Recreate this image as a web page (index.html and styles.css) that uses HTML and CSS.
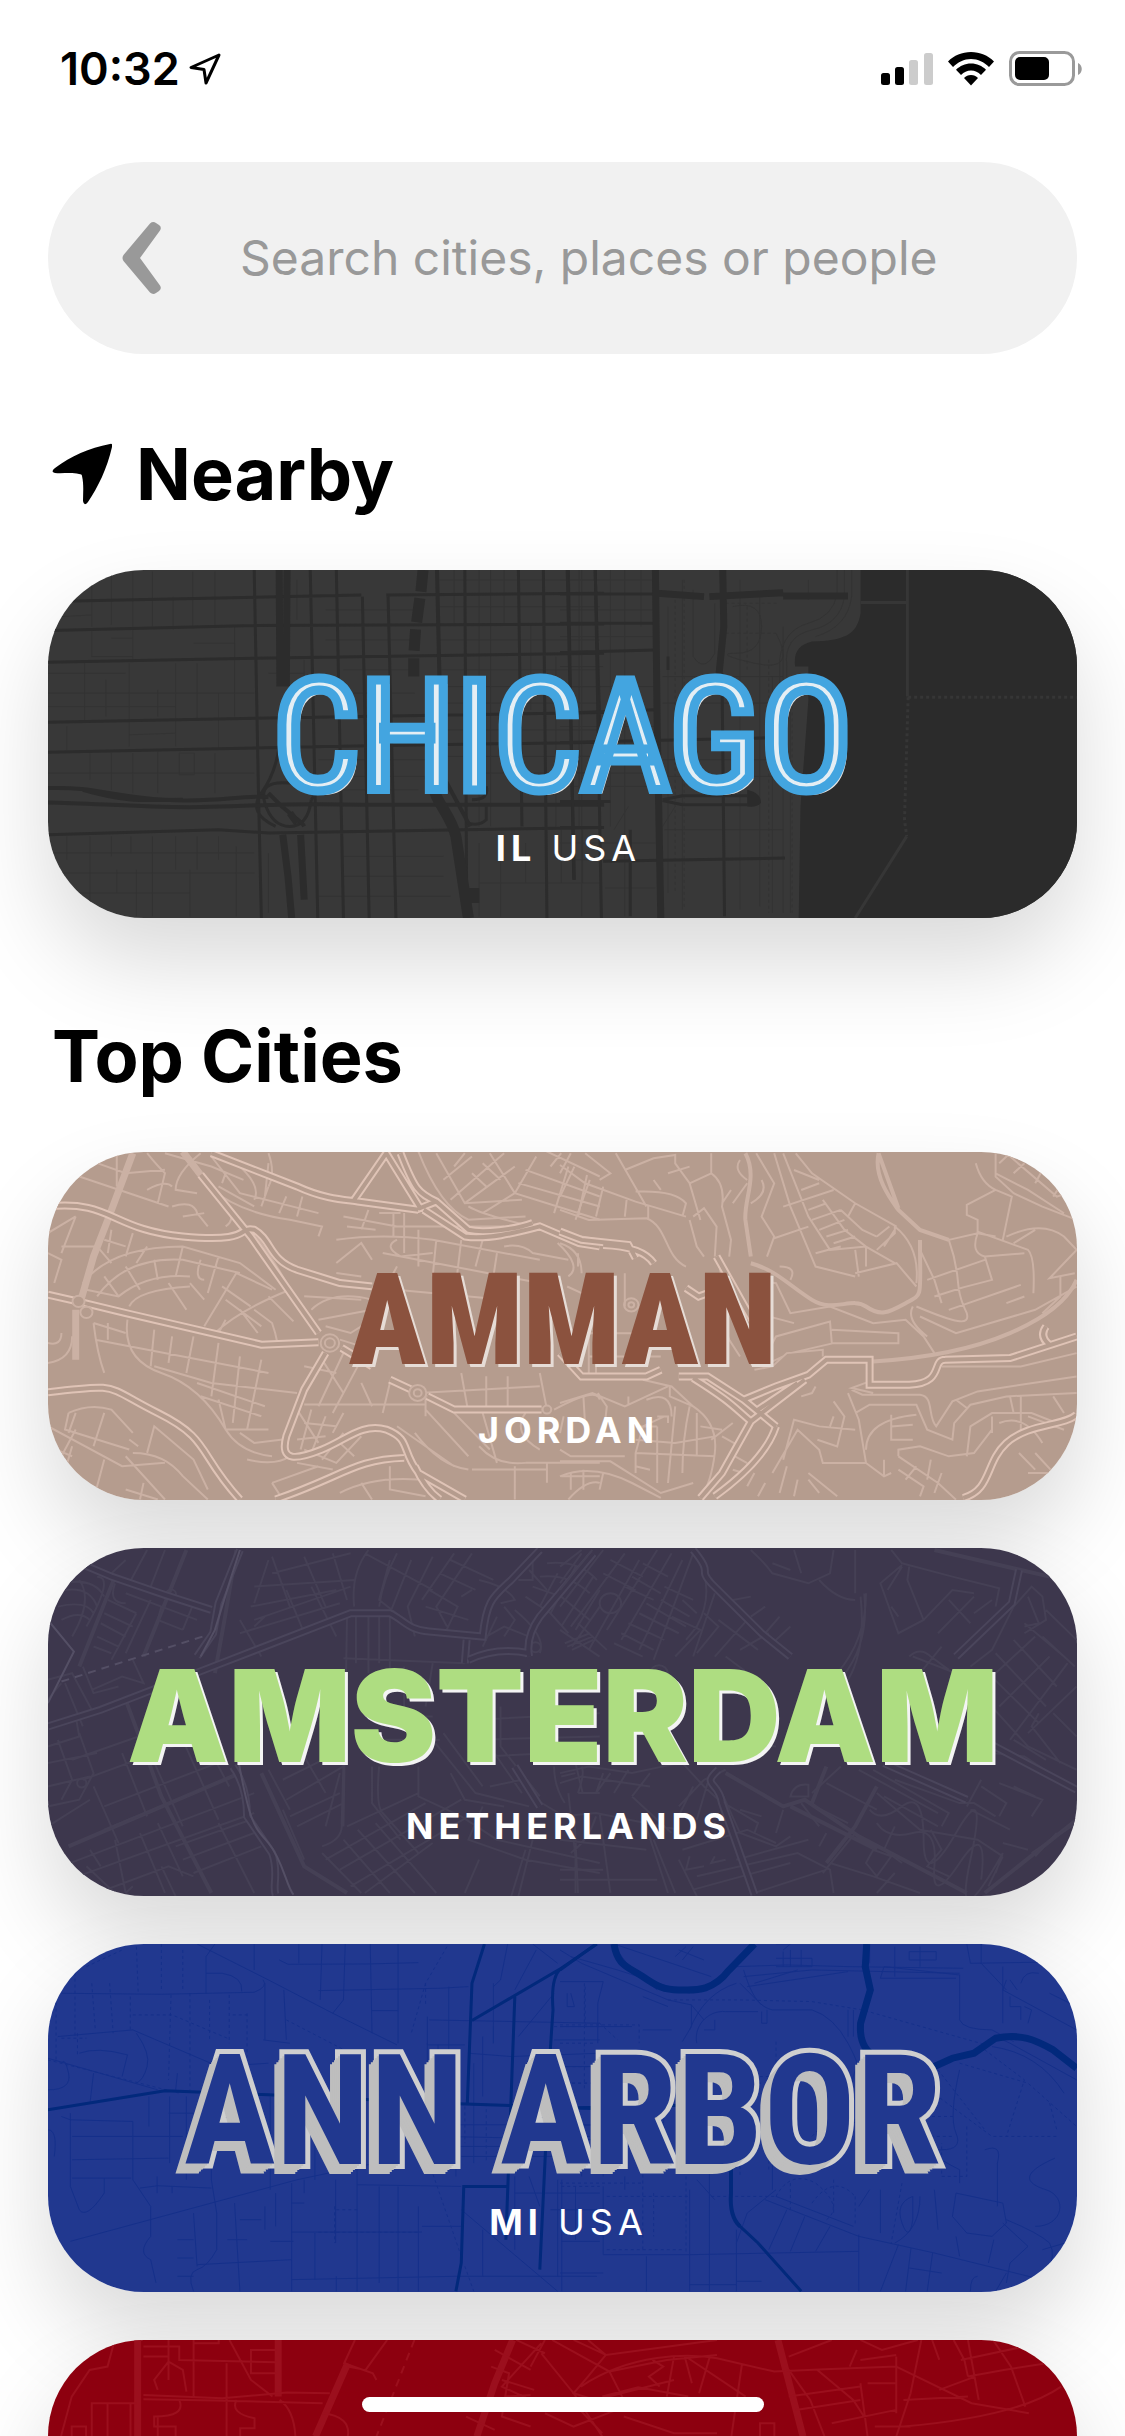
FILE: index.html
```html
<!DOCTYPE html>
<html lang="en">
<head>
<meta charset="utf-8">
<meta name="viewport" content="width=device-width, initial-scale=1">
<title>Search cities</title>
<link rel="stylesheet" href="styles.css">
</head>
<body>
<div class="app">
  <header class="status">
    <div class="status-left">
      <span class="clock">10:32</span>
      <svg width="34" height="34" viewBox="0 0 34 34" fill="none" stroke="#000" stroke-width="3" stroke-linejoin="round"><path d="M31 3 3 15.500 16 17.500 18 31Z"/></svg>
    </div>
    <div class="status-right">
      <svg width="52" height="34" viewBox="0 0 52 34"><rect y="21" width="9" height="12" rx="2.500"/><rect x="14" y="15" width="9" height="18" rx="2.500"/><g fill="#ccc"><rect x="28" y="8" width="9" height="25" rx="2.500"/><rect x="43" y="1" width="9" height="32" rx="2.500"/></g></svg>
      <svg width="46" height="34" viewBox="0 0 46 34"><path d="M23 0C14 0 6 3.500 0 9.500L5 15C10 10 16 7 23 7S36 10 41 15L46 9.500C40 3.500 32 0 23 0Z"/><path d="M23 11.500C17 11.500 12 14 8 17.700L13 23C16 20 19 18.500 23 18.500S30 20 33 23L38 17.700C34 14 29 11.500 23 11.500Z"/><path d="M23 23C20 23 18 24 16 26L23 33.500 30 26C28 24 26 23 23 23Z"/></svg>
      <svg width="74" height="36" viewBox="0 0 74 36"><rect x="1.500" y="1.500" width="63" height="32" rx="9" fill="none" stroke="#9a9a9a" stroke-width="3"/><rect x="6" y="6" width="34" height="23" rx="5"/><path d="M69 12C74 14 74 22 69 24Z" fill="#9a9a9a"/></svg>
    </div>
  </header>

  <form class="search" role="search">
    <button class="back" type="button" aria-label="Back">
      <svg width="40" height="74" viewBox="0 0 40 74" fill="#999"><path d="M28 2.500Q31 0 34 2L37 4Q40 6 38 9.500L18 37 38 64.500Q40 68 37 70L34 72Q31 74 28 71.500L1.500 40Q-.500 37 1.500 34Z"/></svg>
    </button>
    <input class="search-input" type="search" aria-label="Search cities, places or people" placeholder="Search cities, places or people">
  </form>

  <main>
    <section class="section">
      <h2 class="heading">
        <svg width="60" height="62" viewBox="0 0 60 62"><path d="M58 1Q61 0 60 4C55 26 46 44 36 59Q32 64 31 58C31 50 32 42 30 33Q30 31 27 31C19 29 10 31 3 30Q-2 29 3 25C19 13 37 5 58 1Z"/></svg>
        <span>Nearby</span>
      </h2>
      <a class="card chicago" href="#chicago">
        <svg class="map" viewBox="0 0 1029 348" preserveAspectRatio="xMidYMid slice" aria-hidden="true">
          <g class="minor" transform="matrix(.357 0 0 .333 -8 -10)">
            <path d="M145 60V200M200 40V195M260 35V300M315 35V200M373 110V210M428 35V205M490 35V205M545 200V470M60 170 145 165M200 235H260M145 205V290H260M430 250H545V290M22 340H240M125 310V480M185 360V470M22 400H600M250 310V560M330 390V470M380 310V560M440 310V480M500 400V570M22 440H380M250 525 380 520M75 500V570M140 580V660M200 580V690M260 580V700M330 575V700M390 580V645H432V580ZM490 580V700M22 640H600M22 880H600M75 830V900M140 830V1070M200 830V890M255 830V880M315 830V1070M380 830V930M440 830V930M500 830V900M22 940H600M215 930V1000M270 930V1070M420 930V1070M550 860V1070M60 1000H420M640 880V1060M720 60V180M740 300V370M640 340H740M1160 30V190M1230 30V800M1262 30V800M1300 30V190M1375 190V450M1445 290V800M1510 30V800M1120 60H1568M1120 140H1568M1120 240H1568M1120 330H1568M1120 380H1568M1120 430H1568M1120 510H1568M780 650H1100M780 600H1100M1130 590H1568M1240 640H1568M1230 970H1568M1230 850V1070M1290 850V1070M1360 850V970M1460 810V970M1520 810V970M800 150H1050M800 240H1050M850 330H1050M850 400H1050M780 690H1060M850 890H1130M850 950H1130M780 1010H1150"/>
          </g>
          <g class="minor" transform="matrix(.36 0 0 .333 512 -10)">
            <path d="M60 30V1070M140 30V800M180 30V1070M225 30V200M0 60H265M0 150H265M0 230H265M0 320H120M0 380H265M0 500H265M0 590H265M0 640H265M0 680H265M0 850H265M0 900H110M125 985H265M285 350H620M285 430H600M285 600H600M290 650H660M290 810H620M370 90V290Q400 340 430 280V130M340 60V1050M300 140V1000M500 60V1050M555 110V1040M590 350V1060M620 200V1060M640 400V1060M480 140Q560 120 560 200T490 280 540 310 600 220M690 60V120M770 30V100Q760 170 690 190T610 300V400M790 30V110Q780 190 700 210T630 320V400M810 30V110Q800 200 710 230M150 810 190 740M285 800 320 740"/>
            <path class="dots" d="M345 60V1050M320 120V1000M580 300V1060M645 350V1060M460 130H610M460 220H600M520 140V330"/>
          </g>
          <g class="major" transform="matrix(.357 0 0 .333 -8 -10)">
            <path d="M60 124 900 105M970 105 1580 100M30 212 600 197 1580 192M22 307 600 295 1580 280M22 487 770 472 1580 458M22 577 800 560 1580 547M22 825 500 810 640 820 1580 803M600 30 612 700 620 1075M757 30 778 1075M830 30 850 1075M903 110 922 1075M975 110 997 1075M1190 30 1195 1000M1340 30 1350 800M1410 30 1420 1075M1480 30 1495 960M1555 30 1568 500M670 560Q660 640 620 700T660 800M760 720Q750 800 700 800T630 730 700 670 760 720M1250 680Q1260 720 1210 720M1250 740V780Q1230 800 1200 790"/>
            <path class="w2" d="M22 685C150 680 200 710 350 720S560 705 640 712M22 728C150 730 300 745 450 742S650 730 900 735H1580M120 690C250 730 300 720 400 720M640 700C700 770 730 780 740 800M1112 30 1125 640 1205 800"/>
            <path class="w3" d="M670 30 672 380M692 30 690 380M680 825C690 900 700 1000 705 1075M730 825 740 1020M700 760 720 790"/>
            <path class="w4" d="M1073 30 1067 95M1064 115 1055 187M1052 208 1048 272M1047 295V350M1092 650C1110 740 1150 760 1165 830L1200 1075M1215 985V1030"/>
          </g>
          <g class="major" transform="matrix(.36 0 0 .333 512 -10)">
            <path d="M20 30 40 960M98 30 115 1075M0 102H265M0 190H275M0 278 265 270M0 460 265 450M0 548 620 533M0 803H110M120 905 625 895M195 810V1070M450 340 457 1070M0 725H140M285 720 340 708H520M285 722 340 735H520M300 290V330"/>
            <path class="w3" d="M265 30 270 500 280 1075M452 30 455 200 442 340M270 100 400 110M415 110 620 98M620 108H800"/>
            <path class="water" d="M835 30V160C825 225 790 242 700 245 665 255 648 275 653 320H690V420L668 740 663 1075H1450V30ZM520 690Q560 700 558 730 545 745 520 740Z"/>
            <path class="pier" d="M965 30V410M835 128H965M963 830 820 1075"/>
            <path class="pier dots" d="M967 412H1435M967 412 957 780 963 830"/>
          </g>
        </svg>
        <span class="wordmark">CHICAGO</span>
        <span class="place"><b>IL</b> USA</span>
      </a>
    </section>

    <section class="section">
      <h2 class="heading">Top Cities</h2>
      <div class="cards">
        <a class="card amman" href="#amman">
          <svg class="map" viewBox="0 0 1029 348" preserveAspectRatio="xMidYMid slice" aria-hidden="true">
            <defs>
              <path id="amL" d="M22 620C200 600 200 690 400 710S550 680 600 690C650 720 640 780 720 810L840 850 930 860M450 525 590 710 780 1000M480 460 720 560C800 600 860 600 890 605L1060 630M880 600 970 460 1065 625 1110 605M1010 460C1050 570 1060 580 1110 605L1200 690C1240 700 1330 690 1380 670M1075 630 1190 710C1250 720 1330 700 1400 680L1510 730 1568 740M22 885 105 905 240 940 620 1035 780 1028M845 1045 930 1100M980 1140 1040 1170M1085 1190 1160 1230H1405M800 1060 740 1170 690 1310C670 1390 720 1380 790 1350S900 1270 970 1290C1040 1320 1010 1350 1060 1420L1190 1500M22 1178C230 1150 180 1160 330 1240S440 1360 560 1500M660 1500C850 1430 880 1380 1020 1375M1050 1400Q1080 1470 1120 1500"/>
              <path id="amR" d="M0 275 60 300 190 315 210 355M120 315Q230 320 260 370M350 445 385 470 475 435M435 350 560 590M0 640 60 710H240L280 690M330 710H410L510 780 600 860M370 715C480 790 480 800 530 845L450 1000 390 1075M510 780 600 740 690 705 740 660H860V735H970C1070 730 1030 660 1070 660L1250 655 1435 590M550 810 660 730M600 860Q570 960 430 1070M1350 560Q1330 590 1360 615M530 845 680 720M1120 1075C1200 1050 1180 970 1240 910S1400 860 1435 825"/>
            </defs>
            <g class="minor" transform="matrix(.357 0 0 .333 -8 -152)">
              <path class="w3" d="M260 460 190 660 150 770 115 900M400 455 450 525M100 930V1080"/>
              <path d="M110 530 360 620M160 490 240 520 350 510M215 460V560M300 460Q330 500 350 520L330 610M450 460Q380 520 380 570L440 580M300 570Q350 540 370 560M370 620Q430 600 440 640L470 680M400 650 460 640M480 470 560 580 780 640M500 560 600 620M520 520 510 550M560 500Q620 560 600 600M640 490 630 590M470 560Q560 640 700 660L790 680 780 710M640 560 620 620M690 590 670 640M735 590 720 650M500 600Q560 650 520 680M350 460 480 500 570 540M60 740 160 740 200 790M22 700 100 650M100 650 60 760M22 760 60 780 40 850M180 720 240 740M200 690 190 760M260 700 240 770M300 740 270 790M120 850Q200 740 400 740L560 790 660 870M130 870 220 890Q300 820 420 830M180 830 220 890M240 800 280 870M320 780 330 840M400 740 380 830M160 890Q240 770 400 780L560 820M450 780Q430 840 460 840M500 770 470 880M250 920Q270 870 420 860M360 850 410 930M420 850 460 900M460 980 550 820 650 870M510 860 590 920M490 1000Q560 930 700 870M520 900 620 980M560 930 610 1000M600 930 650 970Q660 1000 665 1030M640 890 710 965M500 1000 520 960M245 960Q230 1080 340 1120 450 1160 520 1290 560 1360 650 1370M150 970 240 1000M155 1020 250 1040 640 1120M190 970V1020M320 990 310 1100M370 1010 360 1090M430 1010 410 1120M500 1030 480 1190M560 1070 540 1270M620 1080 580 1290M320 1100 480 1150 720 1180M440 1150 630 1220M450 1190 620 1250M500 1200 520 1290 640 1290M150 970Q160 1060 180 1120M22 1030Q60 1040 60 1000M22 1090Q90 1080 90 1010"/>
              <path d="M640 460Q660 520 640 560M850 650 1000 680H1300M860 680 940 690M990 640V710M920 630 900 690M950 640 1010 640M830 720Q960 700 1100 720L1400 780M830 790 900 730 930 780M830 820 900 830M1020 640V760M1060 690V800M1110 720 1100 830M1180 720 1160 900M1240 720 1220 800M960 760 1400 850M900 860 1300 900M1000 720Q960 740 1010 770L1100 760M1300 740Q1350 730 1380 760L1480 780M1450 730Q1520 800 1480 830M1000 800 980 840M1280 760 1260 900M720 920Q700 850 600 700M740 890 900 900M760 930Q820 870 930 900M780 960 930 930M840 1020 930 1050M800 980 870 1000 930 960M740 1100 830 1120M790 1080 850 1180M850 1060 780 1220M900 1080 820 1240M740 1215H1080M720 1230 780 1330M760 1230 730 1350M800 1250 760 1360M850 1240 820 1300M740 1270 830 1280M720 1320 800 1310M900 1150 930 1220M980 1150 960 1240M1060 1180 1400 1160M1080 1250V1180M1180 1120 1200 1240M1250 1130V1240M1310 1130V1230M1400 1120 1420 1230M1000 1280 1160 1400M1050 1300Q1120 1400 1200 1410M1080 1230 1200 1370M1160 1240 1260 1350M1240 1240 1280 1390M1230 1340Q1280 1400 1360 1390M1360 1240Q1320 1300 1400 1350M1440 1230Q1560 1160 1568 1200M1360 1390H1568M1210 1410H1420M1330 1400V1500M1420 1390V1450M1460 1430H1568M1480 1500Q1530 1440 1568 1450"/>
              <path d="M1060 455Q1120 620 1200 660L1360 650M1110 460 1190 610 1350 600M1130 540 1210 470M1150 600 1300 460M1190 610 1330 500M1240 640 1330 580M1190 460 1160 500M1260 460 1330 580 1568 660M1210 520 1250 560M1240 490 1290 540M1340 550 1568 620M1360 510 1568 590M1390 470 1330 580M1430 500 1460 460M1480 500 1440 640M1540 540 1500 660M1410 450 1568 530M1200 620Q1260 660 1568 720M80 1240Q140 1210 200 1230L260 1300M80 1240 70 1290 250 1350M100 1240 80 1300M180 1240 150 1340M22 1280 230 1400 350 1390M60 1370 100 1290M90 1340 60 1450M180 1380 150 1500M240 1370 350 1500M300 1360 320 1280 430 1380 470 1470M260 1360Q350 1360 400 1430L470 1500M250 1320 275 1340M290 1450 280 1500M240 1470 330 1500M22 1340 90 1370M560 1300 600 1330 680 1320M580 1380Q660 1400 700 1370M650 1450 780 1400M650 1450 680 1500M740 1350 830 1390 900 1310M720 1390 820 1410M790 1380 850 1300M840 1330 880 1370M980 1400V1470L1080 1490M900 1450 930 1500M840 1480Q930 1430 1060 1440"/>
              <use class="twin" href="#amL"/>
              <use class="core" href="#amL"/>
            </g>
            <g class="minor junction" transform="matrix(.357 0 0 .333 -8 -152)">
              <circle cx="108" cy="905" r="17"/><circle cx="130" cy="938" r="17"/><circle cx="812" cy="1030" r="26"/><circle cx="812" cy="1030" r="14"/><circle cx="1058" cy="1180" r="24"/><circle cx="1058" cy="1180" r="11"/><circle cx="1420" cy="1230" r="12"/>
            </g>
            <g class="minor" transform="matrix(.36 0 0 .333 512 -12)">
              <path class="w2" d="M515 40C550 110 510 180 515 240L530 350M885 40C870 110 920 180 940 210L1000 270 1080 300M885 40 940 205M530 370C600 390 640 440 700 480S810 470 850 500 910 520 960 490 1000 480 1000 300M870 665Q1100 650 1250 580T1435 420"/>
              <path d="M0 75 70 130 210 185 350 230M0 210 80 240 240 235C300 260 290 350 350 380M30 40 0 100M110 120 140 100 70 40M40 80 0 170M75 105 50 230M120 140 100 230M185 180 180 230M245 195V235M155 40 240 200M210 155Q320 150 350 190L340 230M180 90 260 55 320 45V70L360 130 390 240M260 120 280 150M300 100 360 80M420 40V100L360 130M420 100Q460 130 450 200L475 300 470 350M370 230 400 205 435 260 430 350M400 350 380 320 360 240M475 150 450 190M520 130 480 190M500 60Q480 90 520 120M560 120Q580 160 530 190M545 40 595 130 560 230 595 290 575 350M595 40 640 200 710 380 820 410M620 40 690 230 750 330 850 320M655 40 700 100 820 190 935 260M650 90 720 120M670 150 720 130M620 200 760 150M690 210 740 190M700 240 780 210M595 295 690 260M720 270 790 240M740 290 800 270M760 310 820 290M730 180 790 270 850 320 930 370M780 210 840 270 880 290M880 290 915 260M900 320 930 270M820 190 800 230M880 330 930 280 930 260Q1000 320 990 430M710 340 780 320M820 330 830 410M850 320V380M820 400 935 370 990 440M1080 300 1160 280 1210 290M1080 300C1120 420 1090 430 1130 520 1140 560 1100 550 990 500M1210 150 1130 195V225L1160 240V280Q1140 340 1180 350L1290 340M1155 70Q1170 130 1210 150L1255 170 1230 300M1160 275 1300 330Q1320 350 1315 460M1240 290Q1340 240 1400 290L1435 330 1360 415 1430 400M1260 310 1320 270M1180 350 1200 420Q1120 440 1040 470M1000 330 1040 420 1060 490M1020 420 1180 360M1080 510 1280 435M1210 40V110L1260 160 1340 200 1435 240M1240 40 1380 170 1435 150M1210 100 1300 150 1400 220M1220 70 1250 40M1260 100 1290 70M1320 130 1340 90M1370 170 1400 120"/>
              <path d="M540 420 600 430 640 520 750 500 870 550 960 540 1010 590 1040 640M540 460 580 530 650 550M610 380Q660 380 640 420M980 500Q960 540 1020 590M1000 530 1100 580 1320 510 1435 440M1240 490 1290 470M1340 520 1390 470 1390 410M540 600 580 630 600 590 750 545 755 610 940 610V580L755 570M640 640 760 610M540 690 590 680 630 640 730 630V650M560 680 620 650M670 770 700 760 710 740M1060 680 1280 680 1435 640M870 760 810 745 860 725M810 750 840 765H1000C1040 770 1020 830 1045 860L1090 785 1160 755 1435 710M800 760 830 840 850 970 900 1010 920 1000M820 820 860 795H990L1020 870 1090 900 1095 850 1140 795 1240 770 1435 760M850 930Q850 840 990 825M920 825V900H980M920 860 980 855M1130 950 1140 860 1200 820 1310 820 1380 850M1200 880V830M1280 770V880M1220 850Q1290 820 1340 910M1300 830 1400 870M1100 780 1130 805M1250 770 1260 820M1370 770 1400 820M940 950 940 930 1000 920 1080 950 1150 940 1200 870M940 950 1050 1030 1100 1080M990 980 960 1020M1030 960 1020 1020M1060 1000 1040 1060M1275 940 1320 990M1320 940 1380 1010M1300 1000H1360V1040M1380 970 1435 1010M590 1000 660 870 720 930 730 970 850 970M620 960 650 840 720 860 820 870M760 830 750 860M760 785 790 830 770 920 715 900M630 980 610 1060M660 1020 650 1070M690 1020 720 1060M690 1000 770 1070M1000 1070 1010 1040 940 990M900 960V1010"/>
              <path d="M0 310Q60 330 60 400M50 340V380M20 440 60 460M180 400V500M80 500V700M80 580H200M100 620V700M150 590V660M80 650H280M440 360 450 420 500 560M440 500 470 600 500 650M230 720 310 740 370 800Q440 850 430 940T390 1075M0 790 90 760 180 800 300 740M65 770 70 860M105 760 130 800 125 850M190 770V795M10 830 0 880M0 930 30 950H180M305 740V770L370 800M240 780Q310 750 310 830M270 830H300V850M290 830 230 860 210 940V1000M320 800 300 1030M360 800Q340 900 340 1000M210 860H270M210 900 320 910 430 890M210 940 430 950M210 980 250 990M270 860V1030M380 820V950M0 965H140L280 1060 370 1030M0 1010Q90 970 200 1030L280 1075M30 1000V1050M65 990V1050M120 1000 110 1050M450 890 500 920M470 940 520 970M480 990 510 1000M540 1000 520 1040M570 1030 550 1070M420 900 480 850M390 860 450 870"/>
              <use class="twin" href="#amR"/>
              <use class="core" href="#amR"/>
              <circle cx="198" cy="495" r="20"/><circle cx="198" cy="495" r="8"/>
            </g>
          </svg>
          <span class="wordmark">AMMAN</span>
          <span class="place"><b>JORDAN</b></span>
        </a>

        <a class="card amsterdam" href="#amsterdam">
          <svg class="map" viewBox="0 0 1029 348" preserveAspectRatio="xMidYMid slice" aria-hidden="true">
            <defs>
              <path id="asL" d="M90 60 200 110 350 165 480 210M560 30 500 190 485 280 440 350M22 560 170 510 460 390 870 220 980 220C1020 240 1030 270 1090 275L1240 290C1250 180 1270 170 1320 120L1400 30M1550 40 1400 230Q1360 290 1370 350M1190 370 1195 300M1200 360Q1280 320 1370 340M540 680Q580 740 580 830L650 940C670 1000 650 1040 660 1065M1330 680 1400 800"/>
              <path id="asR" d="M370 30C430 110 380 80 420 130L560 280 640 350M1275 90 1255 190 1100 350M440 690C390 740 440 720 450 790L540 1065M900 670 1130 780M1190 610 1435 750"/>
            </defs>
            <g class="minor" transform="matrix(.357 0 0 .333 -8 -8)">
              <path class="w2" d="M410 30 350 190 290 350M210 110 110 380M550 30 520 220 490 400M80 920 560 700M240 480 340 770 480 1060M620 700 740 980 860 1060"/>
              <path d="M300 30 250 130M350 30 310 140M240 60 190 110M60 130Q150 110 180 170M70 150Q140 140 160 200M50 200Q130 180 150 220M60 240Q110 210 140 240M160 110Q210 110 130 260M110 120Q150 180 90 290M210 130Q190 190 240 190M190 180 270 220M180 220 260 260M170 250 240 290M160 290 220 320M150 320 200 340M240 160 340 200 330 240 400 270M340 200 440 240M270 220 200 360M310 180 240 340M400 270 430 190 370 170M120 380 150 460 220 440M145 450 230 410 290 430 260 360M20 420 90 400 150 520M70 430 120 560M22 480Q50 440 60 430M22 620 110 590 100 530M22 670 160 640M22 740 140 710M50 600 90 720 60 780M110 580 150 700 110 780 22 800M22 860 140 780M150 740 220 910M230 640 300 830M300 620 400 860M400 600 500 840M450 580 530 740M90 660 330 570M120 720 400 610M180 800 520 660M180 870 540 710M60 980 600 760M80 1020 600 820M130 980 210 1060M210 900 240 1060M280 880 350 1060M330 850 400 1010M380 920 590 840M400 960 600 880M430 1000 620 920M500 850 600 1060M140 930 170 980M160 1060 360 980 430 1010M340 980 380 1070M260 1040 240 1060M650 100 870 40M600 140 880 120M590 200 830 150M600 240 870 140M560 280 840 190M640 60 600 190M650 50 700 200M740 50 800 200M820 40 860 180M690 150 740 280M760 140 830 290M560 240 620 350M630 230 600 260M880 200Q870 100 920 30M950 200Q960 120 1000 40M910 40 1100 150M980 60 950 180 1010 230M1040 60 980 220M1100 50 1030 200 1050 290M1160 40 1070 180M1210 40 1110 200 1140 260M1080 200 1200 240M1120 100 1220 150M1150 60 1270 120M1180 170 1210 150M1090 150 1170 200 1130 290"/>
              <path d="M860 230 850 860M885 230V370M920 230V400M950 230V370M980 230V400M850 355 1190 370M930 530H1100M900 600H1120M850 670 845 850Q850 900 790 920M930 680V790L1010 900M950 680Q940 800 960 820L1060 940M1060 680V770L1180 830M860 860 1060 760M800 960 1080 790M840 990 1180 780M870 1040 1200 830M910 1060 1100 910M1240 800 1200 900 1360 960 1568 1000M1180 830 1280 900 1568 970M1230 960 1190 1060M1360 930 1320 1070M1380 900 1340 1070M790 940 900 1060M850 900 980 1060M890 870 1050 1060M940 850 1110 1060M690 780 850 680M680 720 830 640M700 830 840 760M720 860 850 790M640 690 700 810M740 650 800 760M840 700 800 860M680 810 740 960M1100 600 1220 760 1370 800M1130 580 1240 740M1150 700 1190 780 1300 800M1260 500V620L1350 760M1290 500V620L1400 770M1220 540 1568 520M1210 600 1568 590M1240 650 1440 640M1260 740 1350 720M1480 760 1500 950V1060M1500 670 1520 760H1568M1440 680Q1440 740 1470 790M1460 710 1500 700M1390 780 1500 850M1100 370 1080 500M1020 380V560M1230 120Q1310 140 1330 180L1290 190M1300 200 1330 240 1300 290M1330 210Q1420 290 1400 340M1250 290 1300 260 1370 290M1280 230 1240 320M1370 90 1420 150M1340 120H1380V60M1420 70Q1510 60 1560 120M1400 110Q1480 100 1540 160M1380 140 1460 170 1540 240M1360 170 1430 220 1480 280M1450 100 1400 200M1500 80 1430 220M1550 110 1460 260M1568 150 1500 270M1568 200 1490 320M1470 310 1540 280M1490 330 1550 300"/>
              <circle cx="367" cy="163" r="14"/><circle cx="117" cy="730" r="13"/><circle cx="1388" cy="322" r="15"/>
              <use class="twin" href="#asL"/>
              <use class="core" href="#asL"/>
              <path class="bright" d="M22 240 95 335 22 490M560 30 530 130 490 270 450 350M555 660C590 860 600 860 640 910S690 1040 710 1065"/>
              <path class="bright dashed" d="M60 425 470 285"/>
            </g>
            <g class="minor" transform="matrix(.36 0 0 .333 512 -8)">
              <path class="w2" d="M460 700 620 800 680 780 830 890 1130 1060M640 800 880 930M740 680 700 790M880 740 820 860 740 970M1180 1060 1435 840M1040 30 1360 110"/>
              <path d="M120 30 0 200M90 30 0 150M60 30 0 80M180 40 30 260M220 60 80 330M270 30 130 270M310 40 170 300M340 60 220 330M370 40 260 360M140 60 230 110M120 100 210 150M230 70 300 110M200 110 280 160M180 140 260 180M290 140 370 180M280 180 360 230M240 190 350 260M220 220 330 280M190 250 290 300M170 280 260 330M150 310 230 350M0 270 110 350M50 250 130 330M20 320 90 290M60 40 0 130M340 180 380 220M310 230 390 270 320 350M400 100Q420 180 380 260L350 300M430 160 370 350M400 220 440 260 380 340M440 240 550 330M430 350 520 240M500 330 580 280M480 180 530 170M530 230 570 200M570 280 610 230M590 310 640 260M460 350 560 430M530 30Q570 70 590 100L690 130 750 100 760 30M590 70 640 90M650 30 670 100M720 120Q770 180 820 180M920 30 950 70M950 75 890 130 940 280 1010 240 965 120 970 80M910 150 950 80M920 200 940 230M1010 240 1090 150 1150 160M1150 170 1050 280M950 70 1090 110 1220 145 1210 200M1080 180 1140 250M1200 180 1150 220M1260 200 1310 140 1340 170 1350 240 1290 280M1300 170 1330 250 1290 260M1350 210 1435 300M1260 200 1200 330 1140 380M1340 290 1430 380M1290 250 1400 350M1260 300 1380 440M1210 340 1350 500M1180 390 1330 550M1140 430 1300 620M1360 350 1220 500M1320 290 1180 430M1410 370 1250 600M1435 440 1300 580M1370 520 1435 590M1330 520 1310 560 1390 670M1260 600 1350 660M970 350Q1000 320 1030 350L1080 390M1000 400 1060 320M1200 640 1290 650 1360 700M1300 620 1435 690M980 350 1100 400"/>
              <path d="M770 400Q850 300 850 160M785 410Q860 310 845 160M800 420Q850 330 835 170M430 600 600 620M820 160V30"/>
              <path d="M0 700 80 680 200 700 330 670M50 760Q70 700 60 680M50 760H100L120 700M200 770 250 700M0 730 60 710 250 740M200 770 310 880M100 760 140 700M150 760 190 690M330 800 400 720 460 690M340 670 400 740 450 790M410 730 380 840M370 740 320 850M440 780 550 850 540 880M450 760 500 880 600 920 640 890M620 810 600 880M670 790 720 860M500 810 560 830M740 730 880 810M690 790 800 850M640 770Q650 730 690 735V770ZM780 680 700 760M830 690 1050 820M870 690 1080 820 1060 860M930 720 1110 790 1150 790 1210 830M1130 800 1170 720M1170 740 1240 790 1220 830M1220 730 1340 780 1310 830M1260 740 1320 770M1140 810 1250 870M900 770 1050 860M880 760 1000 870 1160 900 1230 950M860 810Q890 850 950 800T1010 900 1100 880 1140 960 1230 940L1210 1000M880 850Q910 900 980 880T1040 980 1110 970 1170 1020M930 860 900 930 950 970M1030 870 1060 930 1020 980 1080 1010M1230 910 1300 930M850 970 870 930 920 950 880 1010ZM1230 950 1190 1040M330 960 380 1070M360 950 350 990 400 980M430 950 420 970 460 960M340 930 520 870 600 910M370 1050 640 970M380 1010 660 940 750 990 760 1060M490 960 690 900M540 1060 740 990M820 880 730 1000M750 970 870 1010 1000 1060M880 1060 930 1000M1320 950 1380 880M1310 940 1435 850M0 990H120M0 830 100 820 330 870M40 830 50 1060M110 820 140 1060M150 830 180 900M0 900 240 930M0 1020 270 1020M260 900 320 1060M230 830 300 1060M740 880 720 920M30 940Q80 900 100 830"/>
              <circle cx="140" cy="190" r="30"/><circle cx="275" cy="400" r="24"/>
              <use class="twin" href="#asR"/>
              <use class="core" href="#asR"/>
            </g>
          </svg>
          <span class="wordmark">AMSTERDAM</span>
          <span class="place"><b>NETHERLANDS</b></span>
        </a>

        <a class="card annarbor" href="#ann-arbor">
          <svg class="map" viewBox="0 0 1029 348" preserveAspectRatio="xMidYMid slice" aria-hidden="true">
            <g class="minor" transform="matrix(.357 0 0 .333 -8 -14)">
              <path d="M60 190 340 193 600 187Q640 170 625 150M440 42 640 150 820 250 1000 345M465 130H510Q570 140 565 185M490 42 465 80V190M600 42V120M630 160V330M683 180 690 330M670 90 695 103 920 102 1060 98M725 42V100M790 42 785 210M855 42 850 210 820 250M925 42 930 310M1003 42V340M780 182 1120 175 1200 170M930 242H1003M22 385 330 480M50 320 260 300 500 410 640 400M110 370Q160 350 245 375L230 440M270 310Q310 370 300 410T270 460M150 430 140 520M22 480Q90 480 80 430T60 400M385 430 380 480M625 330 700 340M85 550V770L110 840Q130 870 180 790V745M60 560 85 570 260 575V750L310 830V920Q270 970 310 990L325 1060M90 620H400M90 690 360 685M305 500V590M360 550H520M363 500V700M410 500V750M90 745H255M85 935 480 820 720 750 940 700M22 600Q50 600 40 680M480 640V750L495 850V960Q470 1010 440 1020T430 1085M280 775 330 768 480 775M328 740V790M370 770V790M430 850 440 1010M545 820 560 1085M560 870H620M525 930H580M645 935H710M630 830V900M660 790V890M705 760V1085M705 820H740M440 1005 705 990M705 907H1070M740 790V750M828 750V940M888 700V1085M950 770V1060M1003 770V1085M888 765 1180 770M1060 830V1085M1070 890H1180M705 1050 1160 1040H1560M645 500V780M770 750V540M770 910V1050M385 1040H430M385 930H430M385 985H430M830 1040V1085M1145 170V520M1085 260V345H1190M1090 270 1568 280M1270 160V340M1310 42 1290 150 1270 170M1390 60 1330 180M1440 190 1340 320M1200 370 1320 380 1568 370M1085 340V700M1115 345V520M1165 360V740M1240 320V500M1270 290V340M1215 400V700M1130 585H1568M1130 620 1568 630M1130 650H1568M1180 680H1568M1330 740V960M1370 740 1400 830M1450 750V1040M1500 770V930M1180 840 1450 1085M1240 900V1040M1330 790H1568M1430 840H1568M1460 935H1568M1568 330H1440M1380 42 1450 100"/>
              <path class="dots" d="M98 110V320M145 160 155 300M195 160 205 310M45 200V390M105 310V380M253 200V300M340 42V185M367 195 360 450M420 190V480M475 210V330M530 195V340M580 250V380M260 255H370L525 325M540 255H580M60 325H130M130 110 230 60M270 50 275 185M400 60V185M22 390 390 490M690 270 870 370M1140 50 1080 160V230M1080 160 1040 310M780 908H1060M825 830V940M1090 700 1180 980M1130 520V650M1190 530V640M1250 520V700M1525 160V480M1440 290H1568M1460 410H1568M1440 460H1568M1330 620H1568M830 840H890M1190 1010 1215 1085M1460 770H1568"/>
            </g>
            <g class="minor" transform="matrix(.36 0 0 .333 512 -14)">
              <path d="M0 155H120L105 220V340M0 290H200M230 300H310M0 410H120M30 190 40 230M20 190V230H40M0 590 100 585 120 650V740M290 555 280 650M60 600V740M0 650H200M0 690H130M5 750V1085M0 1030H120M120 770V975L360 975 830 965M180 740V780M240 980V1085M360 780V1085M415 610V1085M490 900V1085M490 940 520 850 600 780M360 1065H490M490 1055H560M380 750 430 810M600 800 815 890M590 600V780M630 840 580 960M680 860 640 965M750 890 710 965M830 915V1085M570 810 830 920 1040 970 1320 1045M940 945 890 1085M975 955 960 1085M1035 970 1020 1085M970 1015 1060 1030M1160 1040Q1140 1040 1140 1085M1240 1030 1210 1085M1040 780 1050 900M1100 790 1230 820 1240 880 1200 920 1130 910 1090 860ZM1100 920 1110 980M1205 930 1190 1000M1240 870Q1330 910 1360 940 1380 980 1350 1030M1230 880 1300 950 1250 1000 1240 1060M1180 660Q1230 640 1215 700V830M1375 685C1280 730 1290 760 1350 780S1400 890 1320 890M1340 960 1435 930M980 800V870Q970 940 950 880T980 800M1000 800Q1000 900 930 940M890 780V910M860 780 830 830"/>
              <path d="M0 60 60 100 300 210 365 225 400 270M365 225V290L340 335M30 80 160 120 360 190M145 42 200 120 270 180M150 42 420 140M330 60 400 90M350 50 320 80M370 50 340 90M490 160Q400 190 360 300M380 340C370 290 410 240 460 245H550M510 120C530 190 550 230 590 240H700Q760 260 800 340T820 420L800 500M560 225 500 160M400 300H430V270M800 240V320M815 240V320M600 85H700V110H600M620 65V110M640 60V110M670 60V110M600 42 640 42 620 60M490 110 630 105 800 110 1120 115M510 140 700 120 1110 130M520 170 800 125M540 160 660 120M860 50V100M930 50V140M970 65H1045V90H970ZM1000 50V110M890 145H1100M890 145 900 110 1110 135V270Q1120 300 1200 300L1260 335M1130 42 1140 100 1435 95M1230 110V280M1240 150 1230 180 1435 300M1250 200V230H1280V270M1290 230 1310 240 1300 280M1330 130Q1290 120 1280 160M1270 180 1250 150M1170 42V100L1240 180M1390 42 1435 80M1360 190 1435 230M560 245V280H575V240M230 200 300 230M1210 320 1250 340 1435 450M1200 350Q1330 370 1400 490M1110 420Q1080 560 1100 610T1060 660 1110 720V760"/>
              <path class="dots" d="M70 170V280M0 285H220V340M110 280 160 330M0 340H100M0 410H200M0 460H560M120 500V700M230 590V960M130 960H340M130 800H360M0 760H230M260 790V920M350 740V970M290 590V720M300 210 500 210 700 215 840 240 1200 350M420 800H600M700 820Q760 730 820 800M600 800Q640 720 710 760 790 830 740 870M640 760V850M760 750V850M820 800V890M580 440V720M600 480V700M500 600V740M555 440H600V330M700 620Q800 500 890 540M750 640 860 540M840 700 900 600M900 400 1050 500 1200 620H1380M1050 420 1180 600M1110 400 1300 460 1435 590M1180 360 1290 450 1240 620M1130 590V740H1060V640M950 760 920 940M950 560H1100M930 620H1090M1360 520 1380 600"/>
            </g>
            <g class="major" transform="matrix(.357 0 0 .333 -8 -14)">
              <path d="M22 540 350 483 640 495 1130 520 1568 537M1245 42 1210 160 1197 520M1210 272 1460 115 1560 42M1460 115Q1430 140 1437 240L1430 350 1400 1020M1330 200 1305 930M1307 770H1187L1180 1000 1165 1085"/>
            </g>
            <g class="major" transform="matrix(.36 0 0 .333 512 -14)">
              <path d="M0 120 100 42M0 535 400 525Q470 535 472 600"/>
              <path class="w3" d="M150 42C160 110 190 110 230 140S290 180 330 180 420 190 470 120L540 42M852 42 848 110 862 180 835 280C830 350 860 370 880 385S960 415 1040 410L1090 385 1150 370 1210 325C1280 310 1320 330 1370 360L1435 415"/>
              <path class="w2" d="M475 600V790Q470 860 500 890"/>
              <path d="M495 885 550 940 670 1085"/>
            </g>
          </svg>
          <span class="wordmark">ANN ARBOR</span>
          <span class="place"><b>MI</b> USA</span>
        </a>

        <div class="card red">
          <svg class="map" viewBox="0 0 1029 348" preserveAspectRatio="xMidYMin slice" aria-hidden="true">
            <g class="minor" transform="matrix(.717 0 0 .333 -48 -40)">
              <path class="w3" d="M192 120V420M388 120V290M485 190 440 410M715 120 690 250 665 410M1085 120 1120 410"/>
              <path d="M160 120 150 200 125 210 100 290 85 410M100 410V380H120V410M128 410V310H190M150 310V410M182 310V410M200 170H235V240M200 140H250V180L385 187M235 120V170M270 120V290M305 120V130H270M385 150 350 150 350 220H385M316 190V410M235 185 215 240 220 270M235 185 255 210 260 275M320 120 350 240 380 290M200 285 310 295 400 278 460 280M200 298 300 302 450 310M250 300Q260 350 215 350V380H245V410M330 300Q320 340 355 355V385H335V410M390 300Q410 330 412 410M220 350V410M495 120 480 190 520 220 525 240M485 200 510 210 530 150 540 120M450 340Q490 350 485 410M650 350 690 390M685 200 710 220 700 350 740 380M690 150 740 210M755 130 700 260 760 320M755 160 800 280 840 410M770 120 850 215 870 300M845 165 820 230 800 280 830 300 940 240M845 165 800 120M820 120 845 165 1000 120M850 215 930 180 1000 165M760 120 740 200M720 120 760 160M700 240 745 270M705 290 740 285M810 260C880 160 960 160 1000 175L1080 215 1150 208 1250 200M840 290 890 262 960 290M940 170 930 290M910 180 925 200 905 230 920 260M955 170 965 250M990 170 975 280M960 175 1040 290M1035 190 1020 410M1100 170 1160 120M1100 290 1200 260M1110 330 1200 300M1100 210 1130 300 1150 410M1140 210 1190 300 1205 350M1195 150 1185 200M1200 120 1230 150 1280 120M1200 180 1250 165M1285 120 1270 280 1250 410M1250 200 1355 310 1435 340M1210 250H1250M1250 170V340M1200 250 1210 410M1300 120 1310 180M1330 120 1345 180 1350 230M1350 120 1365 300M1385 120 1410 200 1430 320M1340 180 1450 130M1350 230 1400 210 1460 190M1310 270 1360 230M1260 380Q1420 350 1480 260M1260 300 1350 290M1220 380H1270M1160 370 1250 330M870 350 940 400 1000 400M760 340 800 380 860 330M800 310 840 400M1060 410V370H1080V410"/>
              <path class="dashed" d="M578 120 525 410"/>
            </g>
          </svg>
        </div>
      </div>
    </section>
  </main>
  <div class="home-indicator"></div>
</div>
</body>
</html>
```
FILE: styles.css
```css
* { box-sizing: border-box; }

body {
  margin: 0;
  background: #fff;
  color: #000;
  font-family: Inter, "Liberation Sans", sans-serif;
}

svg { display: block; flex: none; }

.app {
  height: 100vh;
  overflow: hidden;
  padding: 0 48px;
}

/* Status bar */
.status {
  display: flex;
  justify-content: space-between;
  align-items: center;
  height: 138px;
  margin-right: -6px;
}
.status-left,
.status-right { display: flex; align-items: center; }
.status-left { gap: 8px; padding-left: 12px; }
.status-right { gap: 15px; }
.clock { font-size: 45px; line-height: 52px; font-weight: 600; }

/* Search */
.search {
  display: flex;
  align-items: center;
  height: 192px;
  margin: 24px 0 0;
  padding: 0 64px;
  border-radius: 96px;
  background: #f1f1f1;
}
.back {
  padding: 10px;
  border: 0;
  background: none;
}
.search-input {
  flex: 1;
  min-width: 0;
  margin-left: 68px;
  padding: 0;
  border: 0;
  outline: 0;
  background: none;
  font: 400 48px/64px Inter, "Liberation Sans", sans-serif;
  color: #000;
}
.search-input::placeholder { color: #999; opacity: 1; }

/* Sections */
.section { padding-top: 72px; }
.section + .section { padding-top: 90px; }
.heading {
  display: flex;
  align-items: center;
  gap: 24px;
  height: 96px;
  margin: 0 0 48px;
  padding-left: 4px;
  font-size: 72px;
  line-height: 96px;
  font-weight: 700;
}
.cards { display: grid; gap: 48px; }

/* City cards */
.card {
  position: relative;
  display: flex;
  flex-direction: column;
  align-items: center;
  min-height: 348px;
  padding: 84px 0 44px;
  border-radius: 96px;
  color: #fff;
  text-decoration: none;
  box-shadow: 0 45px 90px rgba(0, 0, 0, .15);
}
.map {
  position: absolute;
  inset: 0;
  width: 100%;
  height: 100%;
  border-radius: 96px;
  background: var(--land);
}
.wordmark,
.place { position: relative; white-space: nowrap; }
.wordmark { height: 168px; line-height: 168px; }
.place {
  padding-left: 12px;
  font-size: 36px;
  line-height: 52px;
  font-weight: 400;
  letter-spacing: 5px;
}
.place b { font-weight: 700; }

/* Map strokes */
.map g { fill: none; stroke-width: 2; }
.map path,
.map circle { vector-effect: non-scaling-stroke; }
.map .minor { stroke: var(--minor); }
.map .major { stroke: var(--major); stroke-width: 3; }
.map .w2 { stroke-width: 4; }
.map .w3 { stroke-width: 7; }
.map .w4 { stroke-width: 11; }
.map .twin { stroke: var(--major); stroke-width: 8; }
.map .core { stroke: var(--land); stroke-width: 4; }
.map .junction { fill: var(--land); }
.map .dots { stroke-dasharray: 3 3; }
.map .dashed { stroke-dasharray: 8 6; }
.map .bright { stroke: var(--bright); }

.chicago { --land: #383838; --minor: #333; --major: #2c2c2c; }
.chicago .minor { stroke-width: 1; }
.chicago .water { fill: #2b2b2b; stroke: none; }
.chicago .pier { stroke: #363636; }

.amman { --land: #b59c8e; --minor: #cbb1a4; --major: #dfc3b6; }
.amsterdam { --land: #3d374d; --minor: #454055; --major: #4a455b; --bright: #544f65; }
.annarbor { --land: #21388f; --minor: #15308a; --major: #02297c; }
.annarbor .minor { stroke-width: 1; }
.red { --land: #8d000f; --minor: #9b0f1d; }

/* City lettering */
.chicago .wordmark,
.amman .wordmark,
.annarbor .wordmark {
  font-family: "Liberation Sans Narrow", "Roboto Condensed", "DejaVu Sans Condensed", sans-serif;
}
.chicago .wordmark {
  font-size: 154px;
  color: #e4eef4;
  -webkit-text-stroke: 9px #43a5e0;
  text-shadow: 4px 4px 0 #e8e8e8;
}
.amman .wordmark {
  font-size: 128px;
  font-weight: 900;
  color: #8b523e;
  text-shadow: 3px 3px 0 #e6dcd6;
}
.amsterdam .wordmark {
  font-size: 128px;
  font-weight: 900;
  color: #aedd81;
  text-shadow: 3px 3px 0 #f4f4f4;
}
.annarbor .wordmark {
  font-size: 154px;
  font-weight: 700;
  color: #21388f;
  -webkit-text-stroke: 10px #cfcfcf;
  paint-order: stroke fill;
  text-shadow: -2px 2px 0 #bebebe, -4px 4px 0 #bebebe, -6px 6px 0 #bebebe,
    -8px 8px 0 #bebebe, -10px 10px 0 #bebebe;
}

.home-indicator {
  position: fixed;
  right: 0;
  bottom: 24px;
  left: 0;
  width: 402px;
  height: 15px;
  margin: 0 auto;
  border-radius: 8px;
  background: #fff;
}
```
